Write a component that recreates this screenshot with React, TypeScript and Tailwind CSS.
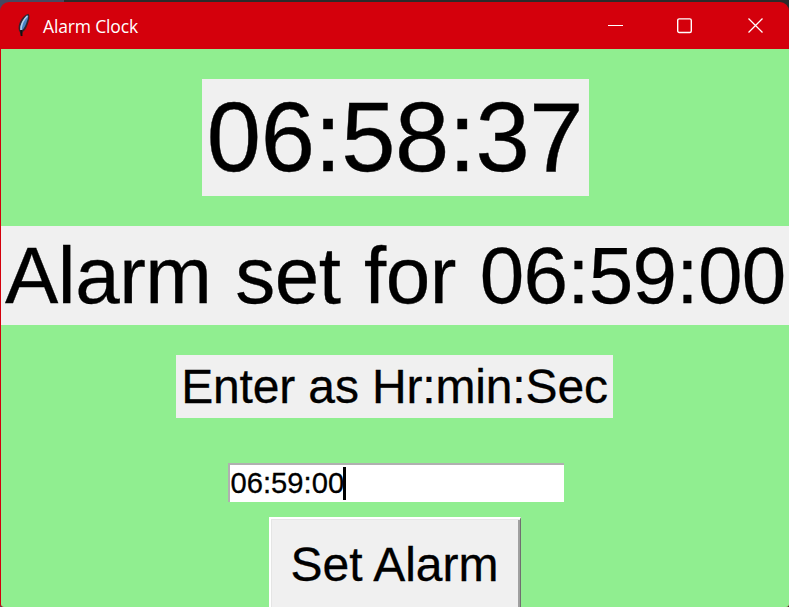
import React from "react";

function Feather() {
  return (
    <svg width="14" height="26" viewBox="0 0 14 26" className="block">
      <path d="M11.5 0.8C8 1.5 4.5 5 2.5 10C1.2 13.5 1.2 17 3 19.5L4.3 23.5L5.8 19C9 17 10.5 12 11.7 8C12.8 5 12.8 2.5 11.5 0.8Z" fill="#35232c" />
      <path d="M11 2C8 4 5 8 3.6 12C2.8 14.5 3 17 4.2 18C7.3 15.5 8.9 11.5 10 8C10.9 6 11.5 4 11 2Z" fill="#4682c4" />
      <path d="M10.3 3C7.3 6 4.9 10 4.2 14L4 17" fill="none" stroke="#b2cfe8" strokeWidth="1.6" />
      <path d="M4.2 17L4.6 23" stroke="#111" strokeWidth="1.8" />
    </svg>
  );
}

export default function App() {
  return (
    <div className="flex h-[607px] w-[789px] flex-col overflow-hidden bg-[#2b2b2b] bg-[linear-gradient(90deg,#484860_64px,#2b2b2b_64px)] pt-[2px] font-['Liberation_Sans',Arial,sans-serif] text-black">
      <div className="flex h-[605px] flex-col overflow-hidden rounded-t-[9px] rounded-b-[3px] bg-[#d4000c]">
        <header className="flex h-[47px] shrink-0 items-center pl-[17px] text-white">
          <Feather />
          <span className="ml-[12px] flex-1 whitespace-nowrap font-['Open_Sans',sans-serif] text-[17.5px] leading-[24px] tracking-[-0.15px]">
            Alarm Clock
          </span>
          <div className="flex items-center gap-[55px] pr-[26px]">
            <svg width="15" height="16" viewBox="0 0 15 16" fill="none" stroke="white">
              <path d="M0 7.5H15" />
            </svg>
            <svg width="15" height="16" viewBox="0 0 15 16" fill="none" stroke="white" strokeWidth="1.4" className="-ml-px mr-px">
              <rect x="0.7" y="0.9" width="13.6" height="13.6" rx="1.5" />
            </svg>
            <svg width="15" height="16" viewBox="0 0 15 16" fill="none" stroke="white" strokeWidth="1.3">
              <path d="M0.5 0.5L14.5 14.5M14.5 0.5L0.5 14.5" />
            </svg>
          </div>
        </header>
        <main className="ml-px flex flex-1 flex-col items-center overflow-hidden rounded-bl-[3px] bg-[#90ee90]">
          <div className="mt-[30px] flex h-[117px] w-[387px] shrink-0 items-center justify-center bg-[#f0f0f0]">
            <span className="whitespace-nowrap text-[97.5px] leading-[115px] tracking-[-0.4px] [-webkit-text-stroke:0.4px_black]">06:58:37</span>
          </div>
          <div className="mt-[30px] flex h-[99px] w-full shrink-0 items-center bg-[#f0f0f0] pl-[4px]">
            <span className="whitespace-nowrap text-[80px] leading-[97px] tracking-[-0.5px] [word-spacing:2px] [-webkit-text-stroke:0.3px_black]">
              Alarm set for <span className="tracking-[-0.7px]">06:59:00</span>
            </span>
          </div>
          <div className="mt-[30px] mr-px flex h-[63px] w-[437px] shrink-0 items-center justify-center bg-[#f0f0f0]">
            <span className="whitespace-nowrap text-[48px] leading-[63px] tracking-[-0.15px] [-webkit-text-stroke:0.3px_black]">Enter as Hr:min:Sec</span>
          </div>
          <div className="mt-[45px] ml-px flex h-[39px] w-[336px] shrink-0 items-center border-t-2 border-l-2 border-[#b0b0b0] bg-white pl-px">
            <span className="whitespace-nowrap text-[29.2px] leading-[37px] [-webkit-text-stroke:0.3px_black]">06:59:00</span>
            <span className="-ml-px h-[33px] w-[3px] bg-black" />
          </div>
          <button className="mt-[15px] flex h-[110px] w-[252px] shrink-0 items-start justify-center border-t-2 border-r border-l-2 border-t-white border-r-[#707070] border-l-white bg-[#f0f0f0] shadow-[inset_1px_1px_0_#e5e5e5,inset_-2px_0_0_#a0a0a0]">
            <span className="whitespace-nowrap pt-[16px] pr-[2px] text-[48px] leading-[60px] [-webkit-text-stroke:0.3px_black]">Set Alarm</span>
          </button>
        </main>
      </div>
    </div>
  );
}
